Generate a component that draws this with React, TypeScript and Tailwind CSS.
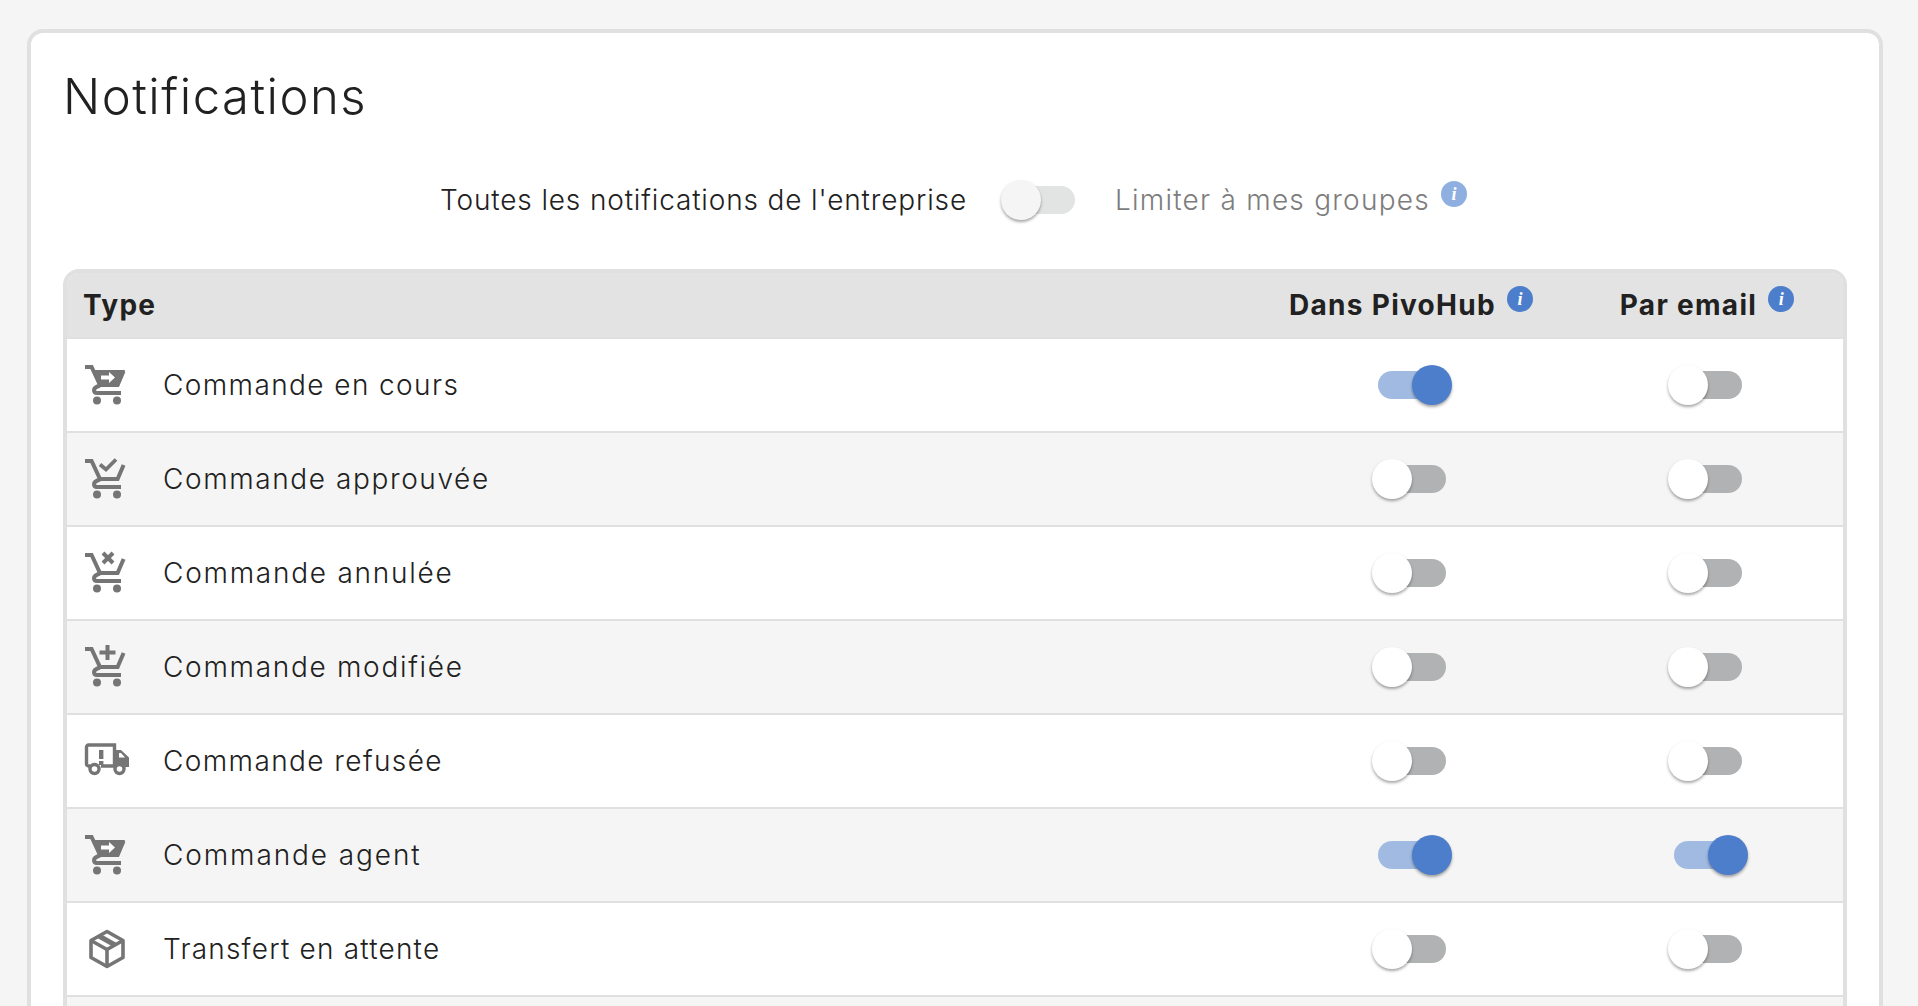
const ROWS = [
  { icon: "cartArrow", label: "Commande en cours", app: true, email: false, tracking: "tracking-[1.4px]" },
  { icon: "cartCheck", label: "Commande approuvée", app: false, email: false, tracking: "tracking-[1.6px]" },
  { icon: "cartCross", label: "Commande annulée", app: false, email: false, tracking: "tracking-[1.75px]" },
  { icon: "cartPlus", label: "Commande modifiée", app: false, email: false, tracking: "tracking-[1.7px]" },
  { icon: "truck", label: "Commande refusée", app: false, email: false, tracking: "tracking-[1.4px]" },
  { icon: "cartArrow", label: "Commande agent", app: true, email: true, tracking: "tracking-[1.9px]" },
  { icon: "box", label: "Transfert en attente", app: false, email: false, tracking: "tracking-[1.2px]" },
];

function CartFrame() {
  return (
    <g fill="none" stroke="#757575" strokeWidth="4">
      <path d="M0 2h6.600L15 20h17.600L38.600 6" />
      <path d="M15 20.500c-4 1.200-6 2.800-6 4.800 0 1.700 1.200 2.700 3 2.700h24" />
      <circle cx="12" cy="35.500" r="4" fill="#757575" stroke="none" />
      <circle cx="32" cy="35.500" r="4" fill="#757575" stroke="none" />
    </g>
  );
}

function RowIcon({ name }: { name: string }) {
  return (
    <svg viewBox="0 -2 44 44" className="h-11 w-11 shrink-0 overflow-visible">
      {name === "cartArrow" && (
        <>
          <CartFrame />
          <path d="M9 5h31l-6 16H15z" fill="#757575" />
          <path d="M16 10.500h8V7l6 5.500-6 5.500v-3.500h-8z" fill="#fff" />
        </>
      )}
      {name === "cartCheck" && (
        <>
          <CartFrame />
          <path d="M15 5.500l6 5 10-10" fill="none" stroke="#757575" strokeWidth="3.800" />
        </>
      )}
      {name === "cartCross" && (
        <>
          <CartFrame />
          <path d="M18 0l10 10M28 0L18 10" fill="none" stroke="#757575" strokeWidth="4" />
        </>
      )}
      {name === "cartPlus" && (
        <>
          <CartFrame />
          <path d="M22.500 -2v15M14.500 5.500h16" fill="none" stroke="#757575" strokeWidth="4" />
        </>
      )}
      {name === "truck" && (
        <>
          <path d="M5 25H3.500a2 2 0 0 1-2-2V6a2 2 0 0 1 2-2h26v21H16" fill="none" stroke="#757575" strokeWidth="3.400" />
          <path d="M14 9h4.400v9H14zM14 20h4.400v4H14z" fill="#757575" />
          <path d="M29 9h7l8 7.500V26h-4a6 6 0 0 0-11 0z" fill="#757575" />
          <path d="M34 12h2l4 4.500h-6z" fill="#fff" />
          <circle cx="9.500" cy="28" r="4.500" fill="#fff" stroke="#757575" strokeWidth="3.400" />
          <circle cx="34.500" cy="28" r="4.500" fill="#fff" stroke="#757575" strokeWidth="3.400" />
        </>
      )}
      {name === "box" && (
        <g fill="none" stroke="#757575" strokeWidth="3.600" strokeLinejoin="round">
          <path d="M22 2.500l16 9v17l-16 9-16-9v-17z" />
          <path d="M6 11.500l16 9 16-9M22 20.500v17" />
          <path d="M14 7l16 9" strokeWidth="5" />
        </g>
      )}
    </svg>
  );
}

function Toggle({ on, muted }: { on: boolean; muted?: boolean }) {
  const track = on ? "bg-[#a0bae2]" : muted ? "bg-[#e2e3e3]" : "bg-[#b1b2b3]";
  const thumb = on ? "left-[34px] bg-[#4c7ecb]" : muted ? "-left-1.5 bg-[#f5f5f5]" : "-left-1.5 bg-white";
  return (
    <div className={`relative h-7 w-[68px] shrink-0 rounded-full ${track}`}>
      <div className={`absolute -top-1.5 h-10 w-10 rounded-full shadow-[0_2px_3px_rgba(0,0,0,0.35)] ${thumb}`} />
    </div>
  );
}

function Info({ faded }: { faded?: boolean }) {
  return (
    <span
      className={`ml-[11px] flex h-[26px] w-[26px] shrink-0 -translate-y-1.5 items-center justify-center rounded-full font-['Liberation_Serif',serif] text-[18px] font-bold italic leading-none tracking-normal text-white ${
        faded ? "bg-[#8fafe0]" : "bg-[#4c7ecb]"
      }`}
    >
      i
    </span>
  );
}

export default function App() {
  return (
    <div className="h-[1006px] overflow-hidden bg-[#f5f5f5] pt-[29px] pl-[27px] pr-[35px] font-['Inter',sans-serif] text-[#212121]">
      <div className="rounded-2xl border-4 border-[#e0e0e0] bg-white px-8 pt-[34px]">
        <h1 className="text-[49px] font-light leading-[60px] tracking-[1.5px]">Notifications</h1>

        <div className="mt-[53px] flex h-10 items-center justify-center pr-[3px] text-[28px] font-light">
          <span className="tracking-[0.85px]">Toutes les notifications de l'entreprise</span>
          <div className="ml-10 mr-10">
            <Toggle on={false} muted />
          </div>
          <span className="tracking-[1.24px] text-[#7d7d7d]">Limiter à mes groupes</span>
          <Info faded />
        </div>

        <div className="mt-[49px] rounded-t-2xl border-x-4 border-t-4 border-[#e0e0e0]">
          <div className="grid h-[66px] grid-cols-[1fr_322px_270px] items-center rounded-t-xl border-b-2 border-[#e0e0e0] bg-[#e3e3e3] pl-4 text-[28px] font-bold tracking-[1.3px]">
            <span>Type</span>
            <div className="flex items-center justify-center pr-[2px]">
              <span>Dans PivoHub</span>
              <Info />
            </div>
            <div className="flex items-center justify-center pr-[2px]">
              <span>Par email</span>
              <Info />
            </div>
          </div>

          {ROWS.map((row, index) => (
            <div
              key={row.label}
              className={`grid h-[94px] grid-cols-[1fr_322px_270px] items-center border-b-2 border-[#e0e0e0] pl-4 text-[28px] font-light ${
                index % 2 === 1 ? "bg-[#f5f5f5]" : "bg-white"
              }`}
            >
              <div className="flex items-center">
                <div className="w-20 pl-0.5">
                  <RowIcon name={row.icon} />
                </div>
                <span className={row.tracking}>{row.label}</span>
              </div>
              <div className="flex justify-center">
                <Toggle on={row.app} />
              </div>
              <div className="flex justify-center">
                <Toggle on={row.email} />
              </div>
            </div>
          ))}
          <div className="h-[94px] bg-[#f5f5f5]" />
        </div>
      </div>
    </div>
  );
}
